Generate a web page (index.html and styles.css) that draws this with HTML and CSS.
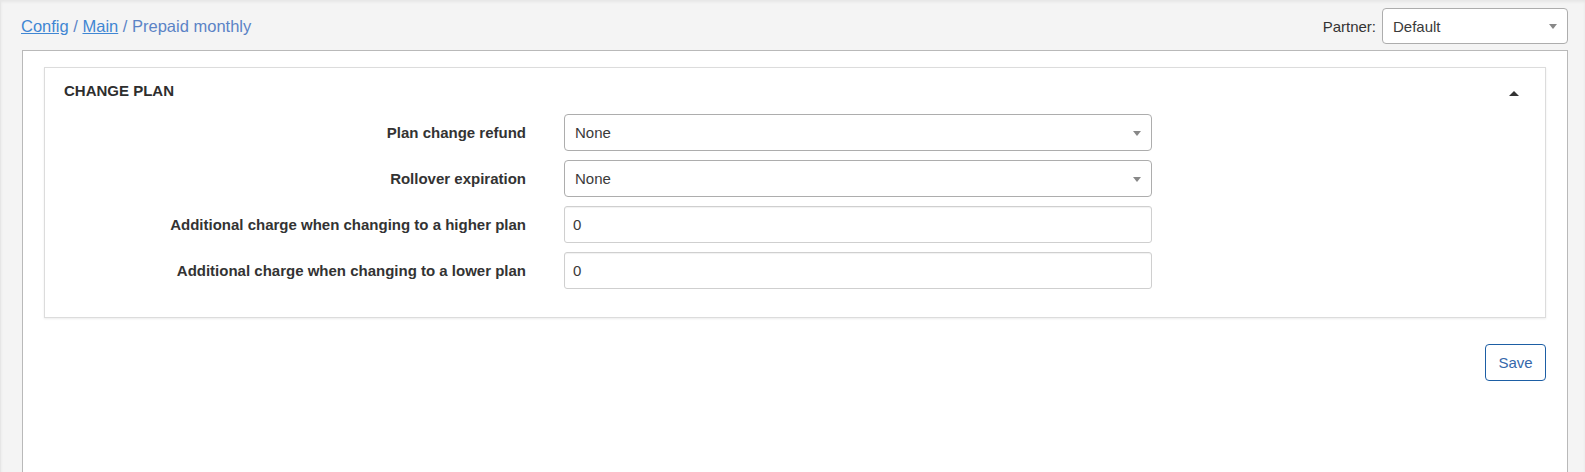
FILE: index.html
```html
<!DOCTYPE html>
<html lang="en">
<head>
<meta charset="utf-8">
<title>Prepaid monthly</title>
<link rel="stylesheet" href="styles.css">
</head>
<body>
<div class="page">
  <header class="topbar">
    <nav class="crumbs">
      <a href="#" class="crumb-link">Config</a><span class="sep"> / </span><a href="#" class="crumb-link">Main</a><span class="sep"> / </span><span class="crumb-current">Prepaid monthly</span>
    </nav>
    <div class="partner">
      <span class="partner-label">Partner:</span>
      <div class="select-wrap partner-select">
        <select class="select"><option>Default</option></select>
      </div>
    </div>
  </header>

  <main class="content">
    <section class="card">
      <div class="card-head">
        <h2 class="card-title">CHANGE PLAN</h2>
        <span class="caret-up"></span>
      </div>
      <div class="form">
        <label class="form-label">Plan change refund</label>
        <div class="select-wrap"><select class="select"><option>None</option></select></div>

        <label class="form-label">Rollover expiration</label>
        <div class="select-wrap"><select class="select"><option>None</option></select></div>

        <label class="form-label">Additional charge when changing to a higher plan</label>
        <input class="input" type="text" value="0">

        <label class="form-label">Additional charge when changing to a lower plan</label>
        <input class="input" type="text" value="0">
      </div>
    </section>
    <div class="actions">
      <button class="btn-save" type="button">Save</button>
    </div>
  </main>
</div>
</body>
</html>
```

FILE: styles.css
```css
* { box-sizing: border-box; }

html, body {
  margin: 0;
  padding: 0;
  height: 100%;
  overflow: hidden;
}

body {
  background: #f4f4f4;
  font-family: "Liberation Sans", Arial, sans-serif;
  color: #333;
}

.page {
  min-height: 100%;
  border-left: 1px solid #e6e6e6;
  box-shadow: inset 0 2px 3px rgba(0, 0, 0, 0.06);
}

.topbar {
  display: flex;
  align-items: center;
  justify-content: space-between;
  padding: 8px 17px 6px 20px;
  height: 50px;
}

.crumbs {
  font-size: 16.5px;
  line-height: 20px;
  color: #5b83c6;
}

.crumb-link {
  color: #3f86d3;
  text-decoration: underline;
}

.sep { color: #5b83c6; }
.crumb-current { color: #5b83c6; }

.partner {
  display: flex;
  align-items: center;
  gap: 6px;
}

.partner-label {
  font-size: 15px;
  color: #333;
}

.select-wrap {
  position: relative;
  height: 37px;
}

.partner-select {
  width: 186px;
  height: 36px;
}

.select-wrap::after {
  content: "";
  position: absolute;
  right: 11px;
  top: 50%;
  margin-top: -2px;
  border-left: 4.5px solid transparent;
  border-right: 4.5px solid transparent;
  border-top: 5px solid #888;
  pointer-events: none;
}

.select {
  appearance: none;
  -webkit-appearance: none;
  width: 100%;
  height: 100%;
  margin: 0;
  padding: 0 28px 0 10px;
  border: 1px solid #adadad;
  border-radius: 4px;
  background: #fff;
  font-family: "Liberation Sans", Arial, sans-serif;
  font-size: 15px;
  color: #3a3a3a;
}

.content {
  margin: 0 17px 0 21px;
  background: #fff;
  border: 1px solid #b9b9b9;
  border-bottom: none;
  min-height: 430px;
  padding: 16px 21px 40px 21px;
}

.card {
  border: 1px solid #dcdcdc;
  box-shadow: 0 1px 2px rgba(0, 0, 0, 0.08);
  background: #fff;
  padding: 13px 26px 28px 19px;
}

.card-head {
  display: flex;
  align-items: center;
  justify-content: space-between;
  height: 20px;
}

.card-title {
  margin: 0;
  font-size: 15px;
  line-height: 20px;
  font-weight: bold;
  color: #2e2e2e;
}

.caret-up {
  width: 0;
  height: 0;
  margin-top: 4px;
  border-left: 5px solid transparent;
  border-right: 5px solid transparent;
  border-bottom: 5px solid #333;
}

.form {
  display: grid;
  grid-template-columns: 462px 588px;
  column-gap: 38px;
  row-gap: 9px;
  margin-top: 13px;
  align-items: center;
}

.form-label {
  text-align: right;
  font-size: 15px;
  font-weight: bold;
  color: #333;
}

.input {
  height: 37px;
  margin: 0;
  padding: 0 8px;
  border: 1px solid #cfcfcf;
  border-radius: 3px;
  box-shadow: inset 0 1px 1px rgba(0, 0, 0, 0.06);
  font-family: "Liberation Sans", Arial, sans-serif;
  font-size: 15px;
  color: #3a3a3a;
  background: #fff;
}

.actions {
  display: flex;
  justify-content: flex-end;
  margin-top: 26px;
}

.btn-save {
  width: 61px;
  height: 37px;
  padding: 0;
  border: 1px solid #1d5ea4;
  border-radius: 4px;
  background: #fff;
  color: #3568ab;
  font-family: "Liberation Sans", Arial, sans-serif;
  font-size: 15px;
}
```
